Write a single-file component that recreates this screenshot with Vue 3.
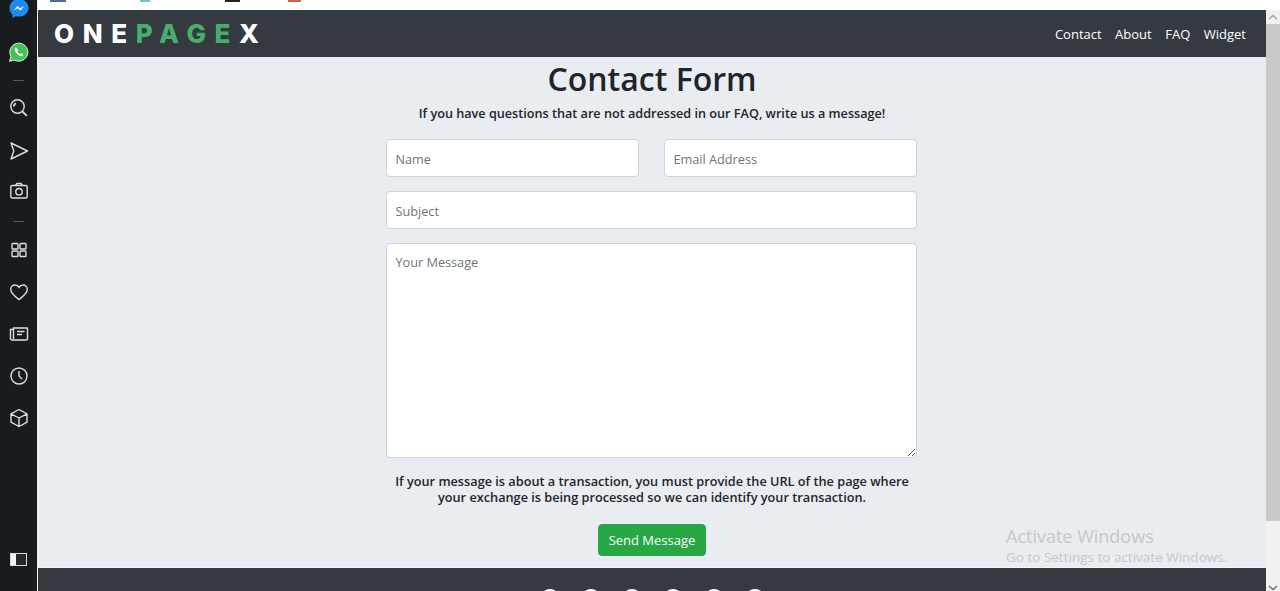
<template>
  <div class="screen">
    <aside class="rail">
      <div class="rail-top">
        <svg class="app-icon messenger" viewBox="0 0 20 20" width="20" height="20">
          <path d="M10 0C4.500 0 .5 4 .5 9c0 2.700 1.200 5 3 6.600V19l3.200-1.800c1 .3 2.100.4 3.300.4 5.500 0 9.500-3.800 9.500-8.600S15.500 0 10 0z" fill="#1c8cf5"/>
          <path d="M4.500 11.500 8.700 7l2.300 2.300L15.500 7l-4.200 4.600L9 9.300z" fill="#fff"/>
        </svg>
        <svg class="app-icon whatsapp" viewBox="0 0 20 20" width="20" height="20">
          <path d="M.6 19.300 2 14.600A9 9 0 1 1 5.400 18z" fill="#43c355" stroke="#e8f5ea" stroke-width="1"/>
          <path d="M7 5.200c-.9.500-1.500 1.600-1.200 2.900.5 2.500 3.400 5.500 6 6 1.200.2 2.300-.4 2.700-1.400l-2.200-1.500-1 .9c-1.200-.5-2.300-1.600-2.900-2.900l.9-1z" fill="#fff"/>
        </svg>
        <span class="rail-dash"></span>
        <svg class="rail-icon search" viewBox="0 0 20 20">
          <circle cx="8.500" cy="8.500" r="6.700"/>
          <path d="M4.800 8.500A3.700 3.700 0 0 1 7 5.200M13.300 13.300l4.500 4.500" stroke-width="1.800"/>
        </svg>
        <svg class="rail-icon arrow" viewBox="0 0 20 20">
          <path d="M2 2 18.500 10 2 18 4.800 10z" stroke-linejoin="round"/>
        </svg>
        <svg class="rail-icon camera" viewBox="0 0 20 20">
          <rect x="1.800" y="4.500" width="16.400" height="12.500" rx="1.500"/>
          <path d="M6.500 4.500 8 2.500h4l1.500 2"/>
          <circle cx="10" cy="10.700" r="3.200"/>
        </svg>
        <span class="rail-dash second"></span>
        <svg class="rail-icon grid" viewBox="0 0 20 20">
          <rect x="3" y="3.500" width="6" height="5.500" rx=".8"/>
          <rect x="11" y="3.500" width="6" height="5.500" rx=".8"/>
          <rect x="3" y="11" width="6" height="5.500" rx=".8"/>
          <rect x="11" y="11" width="6" height="5.500" rx=".8"/>
        </svg>
        <svg class="rail-icon" viewBox="0 0 20 20">
          <path d="M10 17.500C6 14.500 1.700 11.500 1.700 7.300c0-2.500 2.100-4.300 4.300-4.300 1.700 0 3.200.9 4 2.300.8-1.400 2.300-2.300 4-2.300 2.200 0 4.300 1.800 4.300 4.300 0 4.200-4.300 7.200-8.300 10.200z"/>
        </svg>
        <svg class="rail-icon" viewBox="0 0 20 20">
          <path d="M4.500 5.500v-1.500h13.500a.5.500 0 0 1 .5.500V15a1 1 0 0 1-1 1H3a1.500 1.500 0 0 1-1.500-1.500V5.500h3V15"/>
          <path d="M8 7.500h7.500M8 10.500h5" stroke-width="1.600"/>
        </svg>
        <svg class="rail-icon" viewBox="0 0 20 20">
          <circle cx="10" cy="10" r="8"/>
          <path d="M10 5v5l3 3"/>
        </svg>
        <svg class="rail-icon" viewBox="0 0 20 20">
          <path d="M10 1.500 18 5.800v8.400L10 18.500l-8-4.300V5.800zM2 5.800 10 10l8-4.200M10 10v8.500" stroke-linejoin="round"/>
        </svg>
      </div>
      <div class="sidebar-toggle"><span></span></div>
    </aside>

    <div class="browser">
      <div class="tabs-strip">
        <span class="strip-mark strip-blue"></span>
        <span class="strip-mark strip-teal"></span>
        <span class="strip-mark strip-black"></span>
        <span class="strip-mark strip-red"></span>
      </div>
      <div class="viewport">
        <div class="page">
          <header class="topbar">
            <div class="logo">ONE<span class="logo-green">PAGE</span>X</div>
            <nav class="nav">
              <a v-for="link in links" :key="link">{{ link }}</a>
            </nav>
          </header>
          <main class="content">
            <h1>Contact Form</h1>
            <p class="lead">If you have questions that are not addressed in our FAQ, write us a message!</p>
            <form class="form" @submit.prevent>
              <div class="form-row">
                <input type="text" placeholder="Name" />
                <input type="text" placeholder="Email Address" />
              </div>
              <input type="text" placeholder="Subject" />
              <textarea placeholder="Your Message"></textarea>
            </form>
            <p class="note">If your message is about a transaction, you must provide the URL of the page where your exchange is being processed so we can identify your transaction.</p>
            <button class="send" type="button">Send Message</button>
          </main>
          <footer class="footer">
            <span v-for="n in 6" :key="n" class="footer-dot"></span>
          </footer>
        </div>
        <div class="scrollbar">
          <div class="scroll-btn"><svg viewBox="0 0 10 6" width="10" height="6"><path d="M1 5 5 1.500 9 5" /></svg></div>
          <div class="scroll-thumb"></div>
          <div class="scroll-end"><svg viewBox="0 0 10 6" width="10" height="6"><path d="M1 1 5 4.500 9 1" /></svg></div>
        </div>
      </div>
      <div class="activate">
        <div class="activate-title">Activate Windows</div>
        <div class="activate-sub">Go to Settings to activate Windows.</div>
      </div>
    </div>
  </div>
</template>

<script setup>
const links = ['Contact', 'About', 'FAQ', 'Widget']
</script>

<style>
html, body {
  margin: 0;
  height: 100%;
  overflow: hidden;
}
</style>

<style scoped>
.screen {
  display: flex;
  width: 1280px;
  height: 591px;
  overflow: hidden;
  background: #fff;
  font-family: "Open Sans", "Noto Sans", sans-serif;
}

.rail {
  flex: 0 0 37px;
  display: flex;
  flex-direction: column;
  justify-content: space-between;
  align-items: center;
  background: #181c1e;
  border-right: 1px solid #f0f2f5;
}

.rail-top {
  display: flex;
  flex-direction: column;
  align-items: center;
  margin-top: -1px;
}

.app-icon {
  display: block;
}

.whatsapp {
  margin-top: 23px;
}

.rail-dash {
  width: 11px;
  height: 1px;
  background: #555a5c;
  margin-top: 18px;
}

.rail-dash.second {
  margin-top: 20px;
}

.rail-icon {
  display: block;
  width: 20px;
  height: 20px;
  margin-top: 22px;
  fill: none;
  stroke: #dcdfe0;
  stroke-width: 1.400;
}

.rail-icon.search {
  margin-top: 17px;
}

.rail-icon.arrow {
  margin-top: 23px;
}

.rail-icon.camera {
  margin-top: 20px;
}

.rail-icon.grid {
  margin-top: 18px;
}

.sidebar-toggle {
  display: flex;
  box-sizing: border-box;
  width: 17px;
  height: 13px;
  margin-bottom: 25px;
  border: 1px solid #d8dadb;
  background: #f1f2f2;
}

.sidebar-toggle span {
  margin-left: 5px;
  flex: 1;
  background: #25292c;
}

.browser {
  position: relative;
  flex: 1;
  display: flex;
  flex-direction: column;
  min-width: 0;
}

.tabs-strip {
  position: relative;
  flex: 0 0 10px;
  background: #fff;
}

.strip-mark {
  position: absolute;
  top: 0;
  height: 2px;
}

.strip-blue { left: 12px; width: 16px; background: #4a69a8; }
.strip-teal { left: 102px; width: 10px; background: #6cc3d2; }
.strip-black { left: 187px; width: 15px; background: #222; }
.strip-red { left: 250px; width: 13px; background: #d8623f; }

.viewport {
  flex: 1;
  min-height: 0;
  display: flex;
}

.page {
  flex: 1;
  min-width: 0;
  display: flex;
  flex-direction: column;
  background: #e9ecf1;
}

.topbar {
  flex: 0 0 47px;
  display: flex;
  justify-content: space-between;
  align-items: center;
  padding: 0 20px 0 16px;
  background: #343a40;
}

.logo {
  color: #fff;
  font-family: Inter, "Liberation Sans", sans-serif;
  font-size: 26px;
  font-weight: 800;
  letter-spacing: 8.600px;
  line-height: 1;
}

.logo-green {
  color: #48ae6a;
}

.nav {
  display: flex;
  gap: 13.500px;
}

.nav a {
  color: #fff;
  font-size: 13px;
  line-height: 20px;
}

.content {
  flex: 1;
  min-height: 0;
  display: flex;
  flex-direction: column;
  align-items: center;
  color: #212529;
}

h1 {
  margin: 1px 0 0;
  font-size: 32px;
  font-weight: 600;
  line-height: 42px;
}

.lead {
  margin: 3px 0 0;
  font-size: 12.650px;
  font-weight: 600;
  line-height: 20px;
}

.form {
  width: 531px;
  margin: 16px 2px 0 0;
  display: flex;
  flex-direction: column;
  gap: 14px;
}

.form-row {
  display: grid;
  grid-template-columns: 253px 253px;
  justify-content: space-between;
}

input, textarea {
  box-sizing: border-box;
  display: block;
  width: 100%;
  height: 38px;
  padding: 1px 9px 0;
  border: 1px solid #ced4da;
  border-radius: 4px;
  background: #fff;
  color: #495057;
  font-family: inherit;
  font-size: 12.700px;
  outline: none;
}

input::placeholder, textarea::placeholder {
  color: #6c757d;
  opacity: 1;
}

textarea {
  height: 215px;
  padding-top: 8px;
  line-height: 20px;
}

.note {
  width: 531px;
  margin: 15px 0 0;
  text-align: center;
  font-size: 12.730px;
  font-weight: 600;
  line-height: 16px;
}

.send {
  margin-top: 19px;
  width: 108px;
  height: 32px;
  border: 1px solid #28a745;
  border-radius: 4px;
  background: #28a745;
  color: #fff;
  font-family: inherit;
  font-size: 13px;
  padding: 0;
}

.footer {
  flex: 0 0 23px;
  display: flex;
  justify-content: center;
  gap: 21px;
  padding-top: 21px;
  box-sizing: border-box;
  background: #343a40;
  box-shadow: 0 -1px 0 #f4f5f7;
  overflow: hidden;
}

.footer-dot {
  flex: 0 0 20px;
  height: 20px;
  border-radius: 50%;
  border: 2px solid #fff;
  box-sizing: border-box;
}

.scrollbar {
  flex: 0 0 14px;
  display: flex;
  flex-direction: column;
  background: #f1f1f1;
}

.scroll-btn {
  height: 14px;
  display: flex;
  align-items: center;
  justify-content: center;
}

.scroll-thumb {
  height: 497px;
  background: #c9c9c9;
}

.scroll-end {
  margin-top: auto;
  height: 6px;
  display: flex;
  align-items: flex-end;
  justify-content: center;
}

.scroll-btn path, .scroll-end path {
  fill: none;
  stroke: #6e6e6e;
  stroke-width: 1.500;
}

.scroll-btn path {
  stroke: #a3a3a3;
}

.activate {
  position: absolute;
  left: 968px;
  top: 525px;
  color: #c4c7cb;
}

.activate-title {
  font-size: 18px;
  line-height: 22px;
}

.activate-sub {
  font-size: 13.500px;
  line-height: 20px;
}
</style>
